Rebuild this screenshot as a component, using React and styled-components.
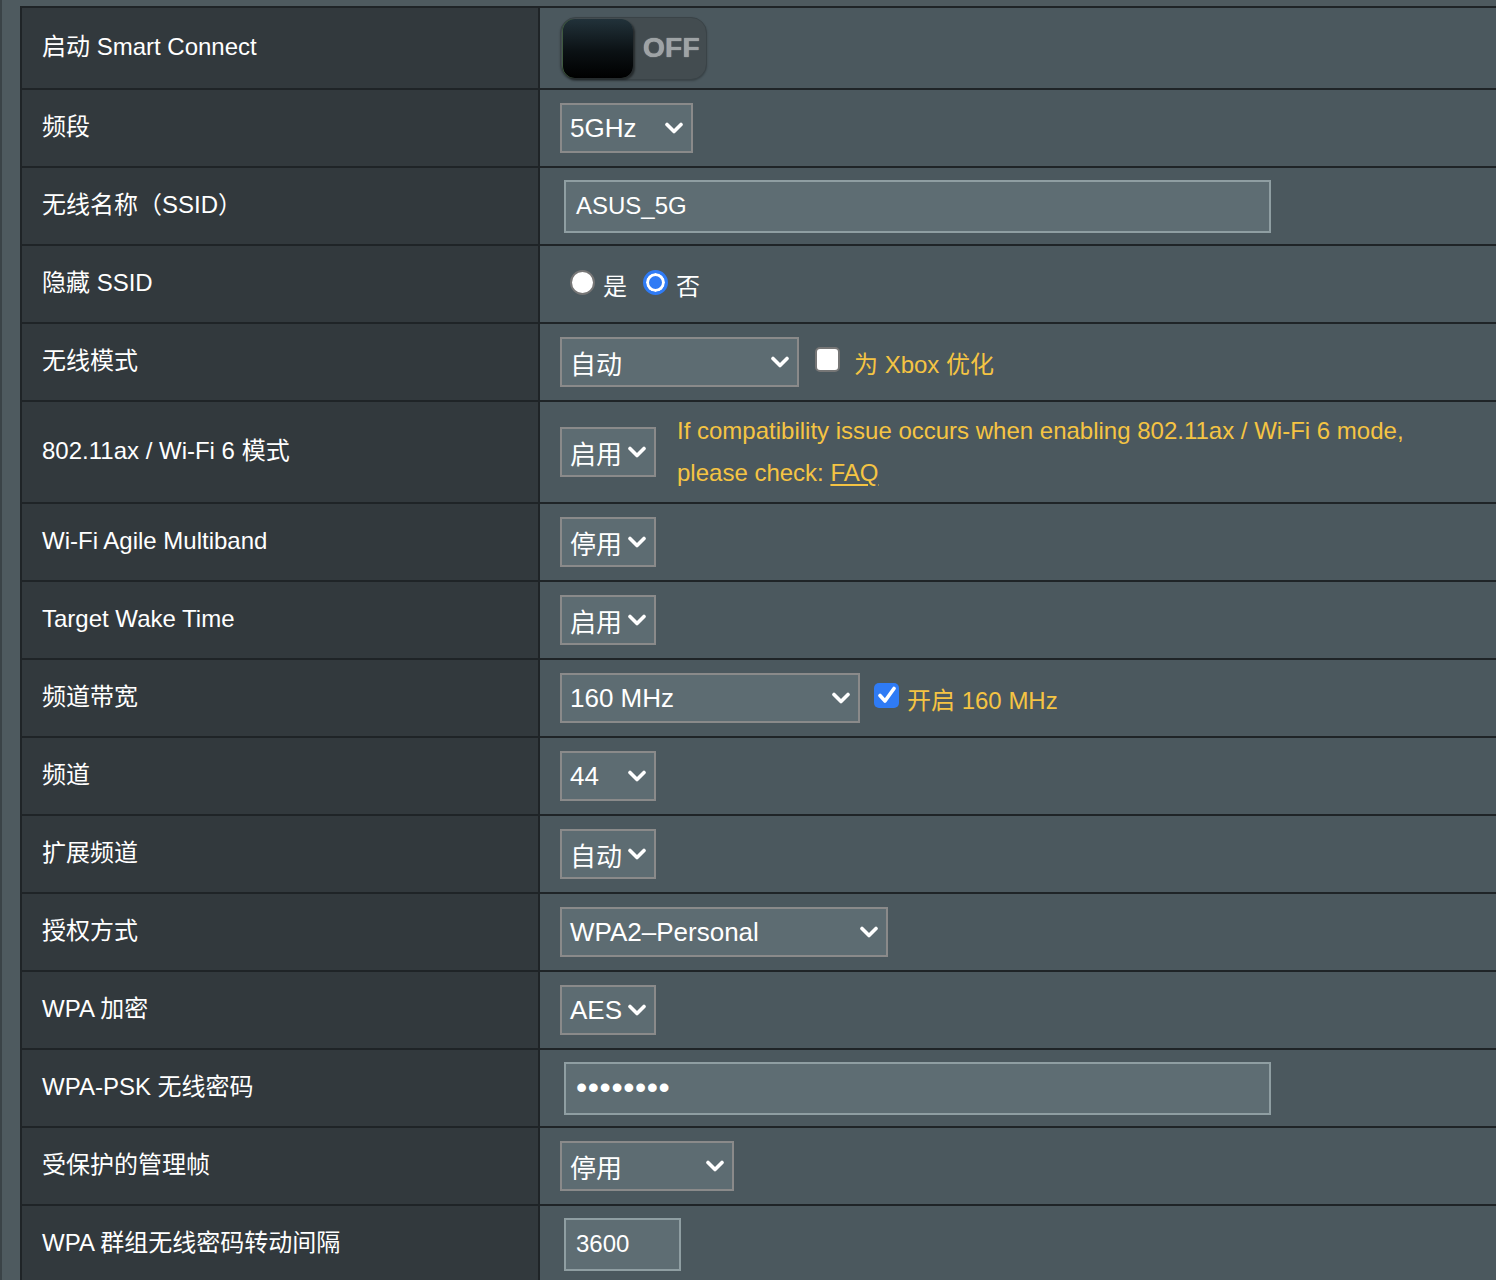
import React from "react";
import styled, { createGlobalStyle } from "styled-components";

const GlobalStyle = createGlobalStyle`
  html, body {
    margin: 0;
    padding: 0;
    background: #4e5a5f;
    overflow: hidden;
  }
  body {
    font-family: "Liberation Sans", Arial, "Noto Sans CJK SC", sans-serif;
    color: #ffffff;
  }
`;

const Page = styled.div`
  min-height: 1280px;
  box-sizing: border-box;
  padding: 6px 0 0 18px;
  border-left: 2px solid #3a4347;
  background: #4e5a5f;
`;

const Table = styled.div`
  display: flex;
  flex-direction: column;
  border-top: 2px solid #1f2427;
  border-left: 2px solid #1f2427;
`;

const Row = styled.div`
  display: grid;
  grid-template-columns: 518px 1fr;
  border-bottom: 2px solid #1f2427;
  min-height: ${(p) => p.$h || 76}px;
`;

const LabelCell = styled.div`
  background: #32393d;
  border-right: 2px solid #1f2427;
  padding: 0 20px 2px;
  display: flex;
  align-items: center;
  font-size: 24px;
  line-height: 28px;
  color: #ffffff;
`;

const ValueCell = styled.div`
  background: #4b585e;
  padding: 0 20px;
  display: flex;
  align-items: center;
  font-size: 24px;
`;

const Toggle = styled.div`
  width: 147px;
  height: 63px;
  box-sizing: border-box;
  border-radius: 16px;
  background: #434c50;
  border: 1px solid #3a4347;
  display: flex;
  align-items: center;
  padding: 1px;
  gap: 10px;
  box-shadow: 0 1px 2px rgba(0, 0, 0, 0.25);
`;

const Knob = styled.div`
  width: 71px;
  height: 59px;
  border-radius: 12px;
  background: linear-gradient(180deg, #22323a 0%, #0b1114 55%, #000000 100%);
  box-shadow: 2px 2px 2px rgba(0, 0, 0, 0.45), inset 1px 0 0 #3f5a3f;
`;

const ToggleText = styled.span`
  font-family: "Liberation Sans", Arial, sans-serif;
  font-weight: bold;
  font-size: 28px;
  color: #9ea3a5;
  text-shadow: 0 0 1px #c5c9cb;
  letter-spacing: 0.3px;
`;

const SelectBox = styled.div`
  width: ${(p) => p.$w}px;
  height: 50px;
  box-sizing: border-box;
  border: 2px solid #8a8a8a;
  background: #5d6c72;
  display: flex;
  align-items: center;
  justify-content: space-between;
  padding: 0 7px 0 8px;
  font-size: 26px;
  color: #ffffff;
  flex-shrink: 0;
`;

const TextField = styled.div`
  width: ${(p) => p.$w}px;
  height: 53px;
  box-sizing: border-box;
  margin-left: 4px;
  border: 2px solid #8f9ea2;
  background: #5e6d73;
  display: flex;
  align-items: center;
  padding: 0 10px;
  font-size: 24px;
  color: #ffffff;
`;

const Dots = styled.span`
  font-size: 32px;
  letter-spacing: 0.6px;
  line-height: 1;
  margin-top: -2px;
`;

const OptionGroup = styled.div`
  display: flex;
  align-items: center;
  margin-left: 10px;
  gap: 16px;
`;

const Option = styled.label`
  display: flex;
  align-items: center;
  gap: 8px;
  font-size: 24px;
  color: #ffffff;
`;

const Radio = styled.span`
  width: 25px;
  height: 25px;
  box-sizing: border-box;
  border-radius: 50%;
  border: ${(p) => (p.$checked ? "3px solid #2f7bf5" : "2px solid #767676")};
  background: ${(p) => (p.$checked ? "#2f7bf5" : "#ffffff")};
  box-shadow: ${(p) => (p.$checked ? "inset 0 0 0 3px #ffffff" : "none")};
  margin-top: -4px;
`;

const Check = styled.span`
  width: 25px;
  height: 25px;
  box-sizing: border-box;
  border-radius: 5px;
  border: ${(p) => (p.$checked ? "none" : "2px solid #767676")};
  background: ${(p) => (p.$checked ? "#2f7bf5" : "#ffffff")};
  display: flex;
  align-items: center;
  justify-content: center;
  flex-shrink: 0;
  margin-top: -6px;
`;

const Hint = styled.span`
  color: #f5c443;
  font-size: 24px;
`;

const CheckRow = styled.div`
  display: flex;
  align-items: center;
  gap: ${(p) => p.$gap || 14}px;
  margin-left: ${(p) => p.$ml || 16}px;
`;

const InlineRow = styled.div`
  display: flex;
  align-items: center;
`;

const Note = styled.div`
  color: #f5c443;
  font-size: 24px;
  line-height: 42px;
  margin-left: 21px;
  padding: 8px 0;
`;

const Link = styled.a`
  color: #f5c443;
  text-decoration: underline;
  text-underline-offset: 3px;
`;

const Chevron = () => (
  <svg width="20" height="12" viewBox="0 0 20 12" aria-hidden="true">
    <path
      d="M3 2.5 L10 9.5 L17 2.5"
      fill="none"
      stroke="#ffffff"
      strokeWidth="3.6"
      strokeLinecap="round"
      strokeLinejoin="round"
    />
  </svg>
);

const Tick = () => (
  <svg width="20" height="18" viewBox="0 0 20 18" aria-hidden="true">
    <path
      d="M3 9.5 L8 15 L17 2.5"
      fill="none"
      stroke="#ffffff"
      strokeWidth="3.6"
      strokeLinecap="round"
      strokeLinejoin="round"
    />
  </svg>
);

const Select = ({ w, children }) => (
  <SelectBox $w={w}>
    <span>{children}</span>
    <Chevron />
  </SelectBox>
);

export default function App() {
  return (
    <>
      <GlobalStyle />
      <Page>
        <Table>
          <Row $h={80}>
            <LabelCell>启动 Smart Connect</LabelCell>
            <ValueCell>
              <Toggle>
                <Knob />
                <ToggleText>OFF</ToggleText>
              </Toggle>
            </ValueCell>
          </Row>
          <Row>
            <LabelCell>频段</LabelCell>
            <ValueCell>
              <Select w={133}>5GHz</Select>
            </ValueCell>
          </Row>
          <Row>
            <LabelCell>无线名称（SSID）</LabelCell>
            <ValueCell>
              <TextField $w={707}>ASUS_5G</TextField>
            </ValueCell>
          </Row>
          <Row>
            <LabelCell>隐藏 SSID</LabelCell>
            <ValueCell>
              <OptionGroup>
                <Option>
                  <Radio />
                  是
                </Option>
                <Option>
                  <Radio $checked />
                  否
                </Option>
              </OptionGroup>
            </ValueCell>
          </Row>
          <Row>
            <LabelCell>无线模式</LabelCell>
            <ValueCell>
              <Select w={239}>自动</Select>
              <CheckRow $ml={16} $gap={14}>
                <Check />
                <Hint>为 Xbox 优化</Hint>
              </CheckRow>
            </ValueCell>
          </Row>
          <Row $h={100}>
            <LabelCell>802.11ax / Wi-Fi 6 模式</LabelCell>
            <ValueCell>
              <InlineRow>
                <Select w={96}>启用</Select>
                <Note>
                  If compatibility issue occurs when enabling 802.11ax / Wi-Fi 6 mode,
                  <br />
                  please check: <Link href="#">FAQ</Link>
                </Note>
              </InlineRow>
            </ValueCell>
          </Row>
          <Row>
            <LabelCell>Wi-Fi Agile Multiband</LabelCell>
            <ValueCell>
              <Select w={96}>停用</Select>
            </ValueCell>
          </Row>
          <Row>
            <LabelCell>Target Wake Time</LabelCell>
            <ValueCell>
              <Select w={96}>启用</Select>
            </ValueCell>
          </Row>
          <Row>
            <LabelCell>频道带宽</LabelCell>
            <ValueCell>
              <Select w={300}>160 MHz</Select>
              <CheckRow $ml={14} $gap={8}>
                <Check $checked>
                  <Tick />
                </Check>
                <Hint>开启 160 MHz</Hint>
              </CheckRow>
            </ValueCell>
          </Row>
          <Row>
            <LabelCell>频道</LabelCell>
            <ValueCell>
              <Select w={96}>44</Select>
            </ValueCell>
          </Row>
          <Row>
            <LabelCell>扩展频道</LabelCell>
            <ValueCell>
              <Select w={96}>自动</Select>
            </ValueCell>
          </Row>
          <Row>
            <LabelCell>授权方式</LabelCell>
            <ValueCell>
              <Select w={328}>WPA2–Personal</Select>
            </ValueCell>
          </Row>
          <Row>
            <LabelCell>WPA 加密</LabelCell>
            <ValueCell>
              <Select w={96}>AES</Select>
            </ValueCell>
          </Row>
          <Row>
            <LabelCell>WPA-PSK 无线密码</LabelCell>
            <ValueCell>
              <TextField $w={707}>
                <Dots>••••••••</Dots>
              </TextField>
            </ValueCell>
          </Row>
          <Row>
            <LabelCell>受保护的管理帧</LabelCell>
            <ValueCell>
              <Select w={174}>停用</Select>
            </ValueCell>
          </Row>
          <Row>
            <LabelCell>WPA 群组无线密码转动间隔</LabelCell>
            <ValueCell>
              <TextField $w={117}>3600</TextField>
            </ValueCell>
          </Row>
        </Table>
      </Page>
    </>
  );
}
